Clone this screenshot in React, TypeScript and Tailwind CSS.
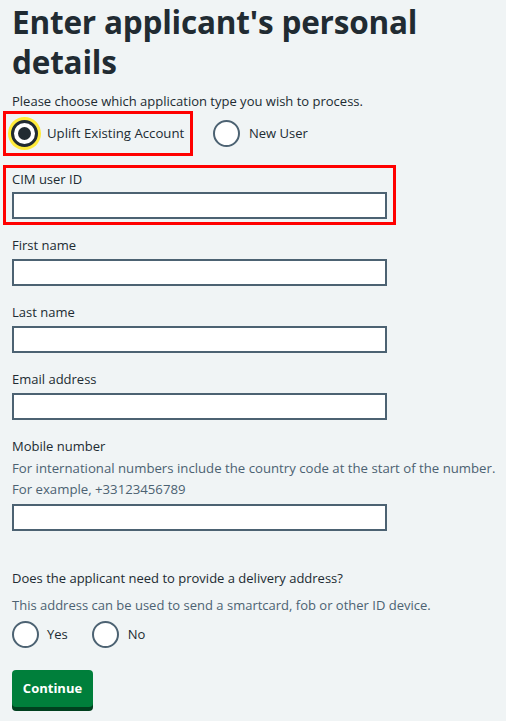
import React from "react";

const font = { fontFamily: '"Open Sans", "Noto Sans", Arial, sans-serif' };

function Radio({ checked = false }: { checked?: boolean }) {
  if (checked) {
    return (
      <span className="relative flex h-[27px] w-[27px] shrink-0 items-center justify-center rounded-full border-[3px] border-[#212b32] bg-white shadow-[0_0_0_3px_#ffeb3b]">
        <span className="h-[13px] w-[13px] rounded-full bg-[#212b32]" />
      </span>
    );
  }
  return <span className="h-[27px] w-[27px] shrink-0 rounded-full border-2 border-[#4c6272] bg-white" />;
}

function Field({ label, className = "" }: { label: string; className?: string }) {
  return (
    <div className={className}>
      <div className="text-[13px] leading-[20px] text-[#212b32]">{label}</div>
      <div className="mt-[4px] h-[27px] w-[375px] border-2 border-[#4c6272] bg-white" />
    </div>
  );
}

export default function App() {
  return (
    <div className="min-h-[721px] w-[506px] bg-[#f0f4f5] pl-[12px] text-[#212b32]" style={font}>
      <h1 className="pt-[2px] text-[31.5px] font-bold leading-[40px] tracking-[-0.2px]">
        Enter applicant's personal details
      </h1>
      <p className="mt-[9px] text-[13px] leading-[20px]">Please choose which application type you wish to process.</p>
      <div className="flex items-center">
        <div className="-ml-[9px] flex h-[45px] w-[190px] items-center gap-[9px] border-[3px] border-[#ff0000] pl-[5px]">
          <Radio checked />
          <span className="text-[13.2px]">Uplift Existing Account</span>
        </div>
        <div className="ml-[20px] flex items-center gap-[9px]">
          <Radio />
          <span className="text-[13px]">New User</span>
        </div>
      </div>
      <div className="-ml-[9px] mt-[9px] w-[393px] border-[3px] border-[#ff0000] pb-[3px] pl-[6px] pt-[1px]">
        <div className="text-[13px] leading-[20px]">CIM user ID</div>
        <div className="mt-[3px] h-[27px] w-[375px] border-2 border-[#4c6272] bg-white" />
      </div>
      <Field label="First name" className="mt-[10px]" />
      <Field label="Last name" className="mt-[16px]" />
      <Field label="Email address" className="mt-[16px]" />
      <div className="mt-[16px]">
        <div className="text-[13px] leading-[20px]">Mobile number</div>
        <div className="mt-[2px] text-[13.2px] leading-[21px] text-[#4c6272]">
          For international numbers include the country code at the start of the number.
          <br />
          For example, +33123456789
        </div>
        <div className="mt-[4px] h-[27px] w-[375px] border-2 border-[#4c6272] bg-white" />
      </div>
      <div className="mt-[37px] text-[13px] leading-[20px]">Does the applicant need to provide a delivery address?</div>
      <div className="mt-[7px] text-[13px] leading-[20px] text-[#4c6272]">
        This address can be used to send a smartcard, fob or other ID device.
      </div>
      <div className="mt-[6px] flex items-center">
        <div className="flex items-center gap-[8px]">
          <Radio />
          <span className="text-[13px]">Yes</span>
        </div>
        <div className="ml-[24px] flex items-center gap-[9px]">
          <Radio />
          <span className="text-[13px]">No</span>
        </div>
      </div>
      <button className="mt-[22px] h-[37px] w-[81px] rounded-[4px] bg-[#007f3b] text-[13px] font-bold text-white shadow-[0_4px_0_#00401e]">
        Continue
      </button>
    </div>
  );
}
